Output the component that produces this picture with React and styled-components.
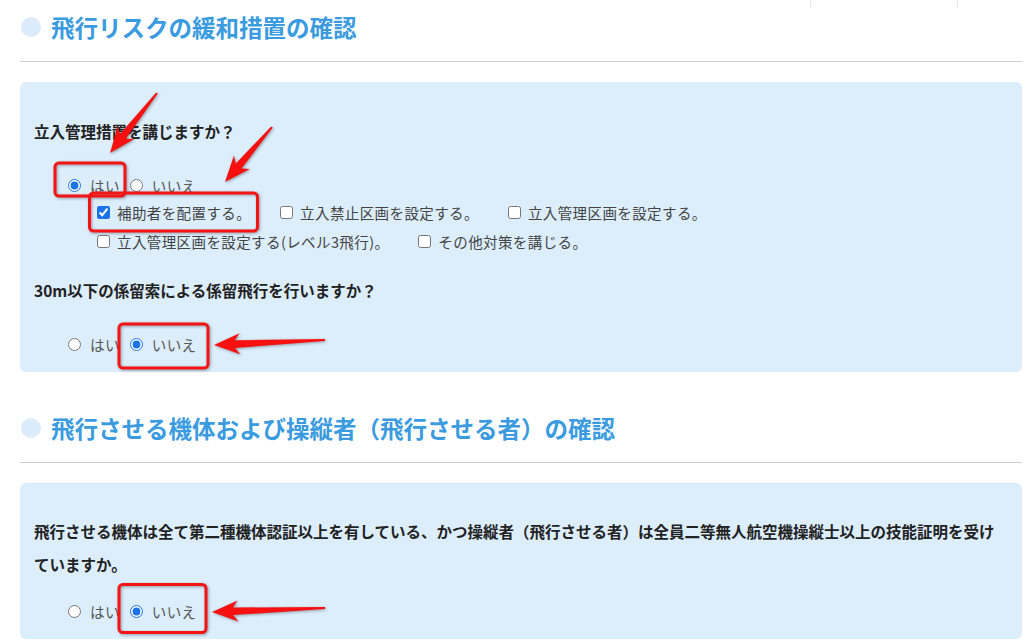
import React from 'react';
import styled, { createGlobalStyle } from 'styled-components';

const GlobalStyle = createGlobalStyle`
	body {
		margin: 0;
		background: #fff;
		font-family: "Noto Sans CJK JP", "Noto Sans", sans-serif;
	}
`;

const Page = styled.div`
	position: relative;
	width: 1024px;
	height: 641px;
	overflow: hidden;
	box-sizing: border-box;
	padding: 0 2px 0 20px;
`;

// spodok tabulky z predchadzajucej casti stranky
const TableTail = styled.div`
	height: 7px;
	display: flex;
	justify-content: flex-end;
	margin-right: 64px;
`;

const TableCell = styled.div`
	width: 146px;
	border-left: 1px solid #e2e2e2;
	border-right: 1px solid #e2e2e2;
`;

const Section = styled.section`
	padding-top: ${(p) => p.$top}px;
`;

const SectionHeader = styled.div`
	display: flex;
	align-items: center;
	gap: 10px;
	height: 34px;
	padding-left: 1px;
`;

const Bullet = styled.span`
	width: 20px;
	height: 20px;
	border-radius: 50%;
	background: #dcebfb;
	flex-shrink: 0;
`;

const Title = styled.h2`
	margin: 0;
	font-size: 23.5px;
	line-height: 34px;
	font-weight: 700;
	color: #3a9be0;
`;

const Rule = styled.hr`
	border: 0;
	height: 1px;
	background: #d0d0d0;
	margin: 17px 0 20px;
`;

const Panel = styled.div`
	background: #dcedfc;
	border-radius: 6px;
	padding: ${(p) => p.$pt}px 14px 15px;
`;

const Question = styled.p`
	margin: ${(p) => p.$mt || 0}px 0 0;
	font-size: 15.5px;
	line-height: 33px;
	font-weight: 700;
	color: #222;
`;

const Options = styled.div`
	padding-top: ${(p) => p.$top}px;
`;

const RadioRow = styled.div`
	display: flex;
	align-items: center;
	height: 26px;
	padding-left: 34px;
`;

const Choice = styled.label`
	display: inline-flex;
	align-items: center;
	font-size: 14.5px;
	letter-spacing: 0.4px;
	color: #555;
	& + & {
		margin-left: 10px;
	}
`;

const Radio = styled.input.attrs({ type: 'radio' })`
	width: 13px;
	height: 13px;
	margin: 0 9px 0 0;
	accent-color: #1a73e8;
`;

const CheckRows = styled.div`
	padding-left: 63px;
`;

const CheckRow = styled.div`
	display: flex;
	align-items: center;
	height: 29px;
`;

const CheckItem = styled.label`
	display: inline-flex;
	align-items: center;
	font-size: 14.5px;
	letter-spacing: 0.4px;
	color: #444;
	margin-right: 29px;
`;

const Checkbox = styled.input.attrs({ type: 'checkbox' })`
	width: 13px;
	height: 13px;
	margin: 0 7px 0 0;
	accent-color: #1a73e8;
`;

// cervene anotacie cez obrazovku
const Overlay = styled.svg`
	position: absolute;
	left: 0;
	top: 0;
	pointer-events: none;
	filter: drop-shadow(1px 1.5px 1.5px rgba(0, 0, 0, 0.35));
`;

const arrowPoints = (x1, y1, x2, y2) => {
	const dx = x2 - x1;
	const dy = y2 - y1;
	const len = Math.hypot(dx, dy);
	const ux = dx / len;
	const uy = dy / len;
	const nx = -uy;
	const ny = ux;
	const headLen = 24;
	const tailW = 1;
	const neckW = 3.8;
	const headW = 10.5;
	const bx = x2 - ux * headLen;
	const by = y2 - uy * headLen;
	const pts = [
		[x1 + nx * tailW, y1 + ny * tailW],
		[bx + ux * 3 + nx * neckW, by + uy * 3 + ny * neckW],
		[bx - ux * 2 + nx * headW, by - uy * 2 + ny * headW],
		[x2, y2],
		[bx - ux * 2 - nx * headW, by - uy * 2 - ny * headW],
		[bx + ux * 3 - nx * neckW, by + uy * 3 - ny * neckW],
		[x1 - nx * tailW, y1 - ny * tailW],
	];
	return pts.map((p) => p.map((v) => v.toFixed(1)).join(',')).join(' ');
};

const boxes = [
	{ x: 55, y: 163, w: 70, h: 33 },
	{ x: 89.5, y: 193, w: 168, h: 38 },
	{ x: 119, y: 324, w: 89, h: 44 },
	{ x: 119, y: 584.5, w: 87, h: 48 },
];

const arrows = [
	[157, 93, 110, 153],
	[272, 127, 225, 182],
	[325, 340, 214, 345],
	[325, 608, 212, 612],
];

const Annotations = () => (
	<Overlay width="1024" height="641" viewBox="0 0 1024 641">
		{boxes.map((b, i) => (
			<rect key={i} x={b.x} y={b.y} width={b.w} height={b.h} rx="4" fill="none" stroke="#f41414" strokeWidth="3" />
		))}
		{arrows.map((a, i) => (
			<polygon key={i} points={arrowPoints(...a)} fill="#f61010" />
		))}
	</Overlay>
);

const YesNo = ({ name, yes }) => (
	<RadioRow>
		<Choice>
			<Radio name={name} defaultChecked={yes} />
			はい
		</Choice>
		<Choice>
			<Radio name={name} defaultChecked={!yes} />
			いいえ
		</Choice>
	</RadioRow>
);

const App = () => (
	<>
		<GlobalStyle />
		<Page>
			<TableTail>
				<TableCell />
			</TableTail>

			<Section $top={3}>
				<SectionHeader>
					<Bullet />
					<Title>飛行リスクの緩和措置の確認</Title>
				</SectionHeader>
				<Rule />
				<Panel $pt={33}>
					<Question>立入管理措置を講じますか？</Question>
					<Options $top={24}>
						<YesNo name="entry" yes />
						<CheckRows>
							<CheckRow>
								<CheckItem>
									<Checkbox defaultChecked />
									補助者を配置する。
								</CheckItem>
								<CheckItem>
									<Checkbox />
									立入禁止区画を設定する。
								</CheckItem>
								<CheckItem>
									<Checkbox />
									立入管理区画を設定する。
								</CheckItem>
							</CheckRow>
							<CheckRow>
								<CheckItem>
									<Checkbox />
									立入管理区画を設定する(レベル3飛行)。
								</CheckItem>
								<CheckItem>
									<Checkbox />
									その他対策を講じる。
								</CheckItem>
							</CheckRow>
						</CheckRows>
					</Options>
					<Question $mt={18}>30m以下の係留索による係留飛行を行いますか？</Question>
					<Options $top={24}>
						<YesNo name="tether" />
					</Options>
				</Panel>
			</Section>

			<Section $top={39}>
				<SectionHeader>
					<Bullet />
					<Title>飛行させる機体および操縦者（飛行させる者）の確認</Title>
				</SectionHeader>
				<Rule />
				<Panel $pt={32}>
					<Question>
						飛行させる機体は全て第二種機体認証以上を有している、かつ操縦者（飛行させる者）は全員二等無人航空機操縦士以上の技能証明を受けていますか。
					</Question>
					<Options $top={17}>
						<YesNo name="license" />
					</Options>
				</Panel>
			</Section>

			<Annotations />
		</Page>
	</>
);

export default App;
